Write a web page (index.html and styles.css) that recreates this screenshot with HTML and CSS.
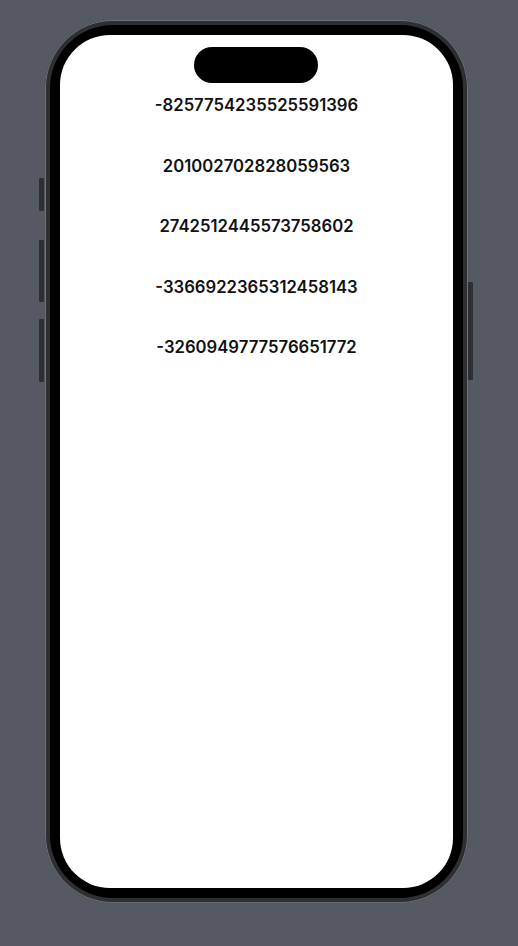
FILE: index.html
```html
<!DOCTYPE html>
<html>
<head>
<meta charset="utf-8">
<link rel="stylesheet" href="styles.css">
</head>
<body>
<div class="stage">
  <div class="phone">
    <span class="btn btn-action"></span>
    <span class="btn btn-volup"></span>
    <span class="btn btn-voldown"></span>
    <span class="btn btn-power"></span>
    <div class="frame">
      <div class="bezel">
        <div class="screen">
          <div class="island"></div>
          <ul class="numbers">
            <li>-8257754235525591396</li>
            <li>201002702828059563</li>
            <li>2742512445573758602</li>
            <li>-3366922365312458143</li>
            <li>-3260949777576651772</li>
          </ul>
        </div>
      </div>
    </div>
  </div>
</div>
</body>
</html>
```
FILE: styles.css
```css
html, body {
  margin: 0;
  padding: 0;
  background: #555a62;
  height: 100%;
}
.stage {
  padding: 20px 0 0 45px;
}
.phone {
  position: relative;
  width: 423px;
  height: 883px;
}
.frame {
  box-sizing: border-box;
  width: 100%;
  height: 100%;
  border-radius: 68px;
  background: #2e2f31;
  box-shadow: inset 0 0 0 1px #6d7076;
  padding: 5px;
}
.bezel {
  box-sizing: border-box;
  height: 100%;
  border-radius: 63px;
  background: #000;
  padding: 10px;
}
.screen {
  position: relative;
  height: 100%;
  background: #fff;
  border-radius: 50px;
  overflow: hidden;
}
.island {
  position: absolute;
  left: 134px;
  top: 12px;
  width: 124px;
  height: 36px;
  border-radius: 18px;
  background: #000;
}
.numbers {
  list-style: none;
  margin: 0;
  padding: 60px 0 0;
  display: flex;
  flex-direction: column;
  gap: 40.5px;
  font-family: Inter, "Liberation Sans", sans-serif;
  font-weight: 600;
  font-size: 16.7px;
  line-height: 20px;
  color: #111;
  text-align: center;
}
.btn {
  position: absolute;
  width: 5px;
  background: #2f3033;
  border-radius: 1px;
}
.btn-action { left: -6px; top: 158px; height: 33px; }
.btn-volup { left: -6px; top: 220px; height: 62px; }
.btn-voldown { left: -6px; top: 299px; height: 63px; }
.btn-power { right: -5px; top: 262px; height: 98px; }
```
